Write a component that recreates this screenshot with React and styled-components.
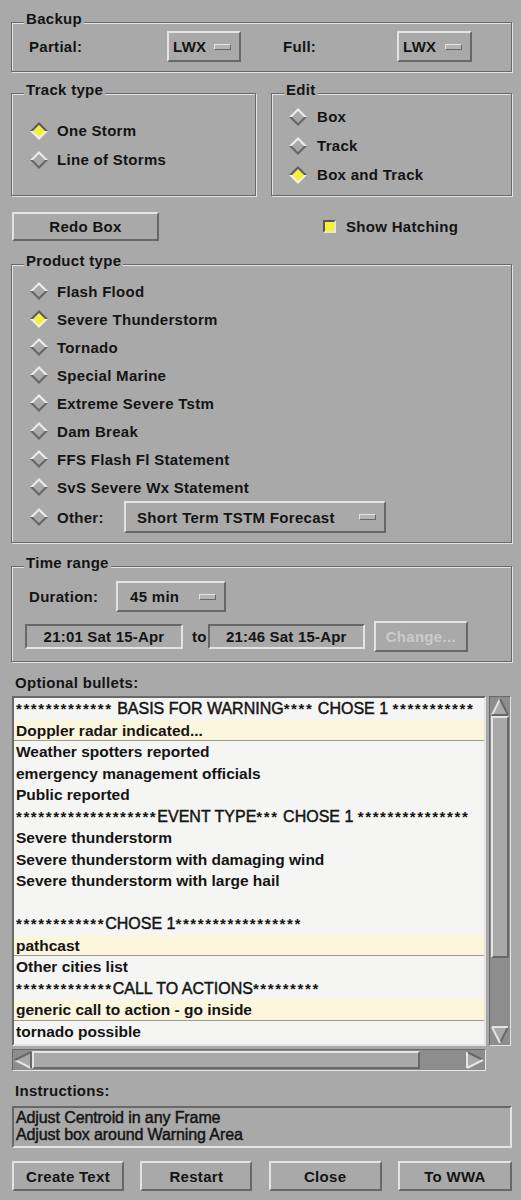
import React from "react";
import styled, { createGlobalStyle } from "styled-components";

const BG = "#a9a9a9";
const LIGHT = "#e4e4e4";
const DARK = "#686868";

const GlobalStyle = createGlobalStyle`
  body {
    margin: 0;
    background: ${BG};
    font-family: "Liberation Sans", Arial, sans-serif;
    font-weight: bold;
    font-size: 15px;
    color: #141414;
  }
`;

const Panel = styled.div`
  width: 521px;
  box-sizing: border-box;
  padding: 22px 9px 0 11px;
  letter-spacing: 0.3px;
`;

const Group = styled.div`
  position: relative;
  border: 1px solid ${DARK};
  box-shadow: inset 1px 1px 0 ${LIGHT}, 1px 1px 0 ${LIGHT};
  padding: ${(p) => p.pad || "0"};
  margin-top: ${(p) => p.mt || 0}px;
`;

const GroupTitle = styled.div`
  position: absolute;
  top: -12px;
  left: 12px;
  padding: 0 2px;
  background: ${BG};
  line-height: 16px;
`;

const BackupRow = styled.div`
  display: grid;
  grid-template-columns: 138px 116px 114px 75px;
  align-items: center;
  height: 31px;
`;

const OptionMenu = styled.div`
  display: flex;
  align-items: center;
  justify-content: space-between;
  box-sizing: border-box;
  width: ${(p) => p.w}px;
  height: ${(p) => p.h || 31}px;
  padding: 0 8px 0 ${(p) => p.pl || 4}px;
  border: 2px solid;
  border-color: ${LIGHT} ${DARK} ${DARK} ${LIGHT};
  white-space: nowrap;
`;

const Indicator = styled.span`
  width: 17px;
  height: 6px;
  box-sizing: border-box;
  border: 1px solid;
  border-color: ${LIGHT} ${DARK} ${DARK} ${LIGHT};
  background: #b4b4b4;
  flex-shrink: 0;
`;

const TwoCol = styled.div`
  display: grid;
  grid-template-columns: 245px 241px;
  gap: 15px;
  margin-top: 21px;
`;

const RadioRow = styled.div`
  display: flex;
  align-items: center;
  gap: ${(p) => p.gap || 9}px;
  height: ${(p) => p.h || 29}px;
`;

const Button = styled.div`
  display: flex;
  align-items: center;
  justify-content: center;
  box-sizing: border-box;
  width: ${(p) => p.w}px;
  height: ${(p) => p.h || 30}px;
  border: 2px solid;
  border-color: ${LIGHT} ${DARK} ${DARK} ${LIGHT};
  color: ${(p) => (p.disabled ? "#cbcbcb" : "#141414")};
`;

const RedoRow = styled.div`
  display: flex;
  align-items: center;
  margin: 16px 0 0 1px;
`;

const Check = styled.label`
  display: flex;
  align-items: center;
  gap: 10px;
  margin-left: 164px;
`;

const CheckBox = styled.span`
  width: 13px;
  height: 13px;
  box-sizing: border-box;
  border: 2px solid;
  border-color: #5a5a3a ${LIGHT} ${LIGHT} #5a5a3a;
  background: #f8f230;
`;

const OtherLabel = styled.span`
  width: 58px;
`;

const DurationRow = styled.div`
  display: flex;
  align-items: center;
  height: 31px;
`;

const DurationLabel = styled.span`
  width: 87px;
  margin-left: 4px;
`;

const TimeRow = styled.div`
  display: flex;
  align-items: center;
  height: 31px;
  margin-top: 9px;
`;

const TimeField = styled.div`
  display: flex;
  align-items: center;
  justify-content: center;
  box-sizing: border-box;
  width: ${(p) => p.w}px;
  height: 25px;
  border: 2px solid;
  border-color: ${DARK} ${LIGHT} ${LIGHT} ${DARK};
  white-space: nowrap;
  letter-spacing: 0.2px;
`;

const To = styled.span`
  margin: 0 1px 0 9px;
`;

const FieldLabel = styled.div`
  margin: ${(p) => p.m};
  line-height: 18px;
`;

const ListRow = styled.div`
  display: flex;
  gap: 3px;
  margin-left: 1px;
`;

const ListBox = styled.div`
  width: 474px;
  height: 350px;
  box-sizing: border-box;
  border: 2px solid;
  border-color: ${DARK} ${LIGHT} ${LIGHT} ${DARK};
  background: #f5f5f3;
  overflow: hidden;
  letter-spacing: 0;
`;

const Item = styled.div`
  height: 21.5px;
  line-height: 21.5px;
  box-sizing: border-box;
  padding-left: 2px;
  white-space: nowrap;
  overflow: hidden;
  font-size: ${(p) => (p.head ? 16 : 15.5)}px;
  font-weight: ${(p) => (p.head ? "normal" : "bold")};
  -webkit-text-stroke: ${(p) => (p.head ? "0.45px #141414" : "0")};
  background: ${(p) => (p.hl ? "#fcf6dc" : "transparent")};
  border-bottom: ${(p) => (p.hl ? "1px solid #9c9c98" : "none")};
`;

const Stars = styled.span`
  letter-spacing: 1.6px;
  font-weight: bold;
  font-size: 15px;
  -webkit-text-stroke: 0;
`;

const VScroll = styled.div`
  display: flex;
  flex-direction: column;
  width: 22px;
  height: 350px;
  box-sizing: border-box;
  border: 1px solid;
  border-color: ${DARK} ${LIGHT} ${LIGHT} ${DARK};
  background: #8d8d8d;
  padding: 1px;
`;

const HScroll = styled.div`
  display: flex;
  width: 474px;
  height: 22px;
  box-sizing: border-box;
  margin: 3px 0 0 1px;
  border: 1px solid;
  border-color: ${DARK} ${LIGHT} ${LIGHT} ${DARK};
  background: #8d8d8d;
  padding: 1px;
`;

const Thumb = styled.div`
  box-sizing: border-box;
  flex: 0 0 ${(p) => p.size}px;
  border: 2px solid;
  border-color: ${LIGHT} ${DARK} ${DARK} ${LIGHT};
  background: ${BG};
`;

const Trough = styled.div`
  flex: 1;
`;

const InfoBox = styled.div`
  width: 500px;
  height: 42px;
  box-sizing: border-box;
  margin-left: 1px;
  border: 2px solid;
  border-color: ${DARK} ${LIGHT} ${LIGHT} ${DARK};
  padding: 1px 2px;
  font-weight: normal;
  font-size: 16px;
  line-height: 17px;
  letter-spacing: -0.1px;
  -webkit-text-stroke: 0.45px #141414;
`;

const ButtonBar = styled.div`
  display: flex;
  justify-content: space-between;
  margin: 13px 0 0 1px;
`;

function Diamond({ on }) {
  return (
    <svg width="18" height="18" viewBox="0 0 18 18">
      <polygon points="0,9 9,0 18,9" fill={on ? "#5c5c5c" : "#ececec"} />
      <polygon points="0,9 9,18 18,9" fill={on ? "#efefef" : "#676767"} />
      <polygon points="3,9 9,3 15,9 9,15" fill={on ? "#f5f03a" : BG} />
    </svg>
  );
}

function Radio({ on, label, gap, h }) {
  return (
    <RadioRow gap={gap} h={h}>
      <Diamond on={on} />
      <span>{label}</span>
    </RadioRow>
  );
}

function Arrow({ dir }) {
  const rot = { up: 0, right: 90, down: 180, left: 270 }[dir];
  const flip = dir === "down" || dir === "right";
  return (
    <svg width="18" height="18" viewBox="0 0 18 18" style={{ flexShrink: 0 }}>
      <g transform={`rotate(${rot} 9 9)`}>
        <polygon points="9,1 17,17 1,17" fill={BG} />
        <line x1="1" y1="17" x2="9" y2="1" stroke={flip ? DARK : LIGHT} strokeWidth="2" />
        <line x1="9" y1="1" x2="17" y2="17" stroke={flip ? LIGHT : DARK} strokeWidth="2" />
        <line x1="1" y1="17" x2="17" y2="17" stroke={flip ? LIGHT : DARK} strokeWidth="2" />
      </g>
    </svg>
  );
}

function StarText({ text }) {
  return text.split(/(\*+)/).map((part, i) =>
    part.startsWith("*") ? <Stars key={i}>{part}</Stars> : <span key={i}>{part}</span>
  );
}

const bullets = [
  { t: "************* BASIS FOR WARNING**** CHOSE 1 ***********", head: true },
  { t: "Doppler radar indicated...", hl: true },
  { t: "Weather spotters reported" },
  { t: "emergency management officials" },
  { t: "Public reported" },
  { t: "*******************EVENT TYPE*** CHOSE 1 ***************", head: true },
  { t: "Severe thunderstorm" },
  { t: "Severe thunderstorm with damaging wind" },
  { t: "Severe thunderstorm with large hail" },
  { t: "" },
  { t: "************CHOSE 1*****************", head: true },
  { t: "pathcast", hl: true },
  { t: "Other cities list" },
  { t: "*************CALL TO ACTIONS*********", head: true },
  { t: "generic call to action - go inside", hl: true },
  { t: "tornado possible" },
];

const products = [
  "Flash Flood",
  "Severe Thunderstorm",
  "Tornado",
  "Special Marine",
  "Extreme Severe Tstm",
  "Dam Break",
  "FFS Flash Fl Statement",
  "SvS Severe Wx Statement",
];

function App() {
  return (
    <Panel>
      <GlobalStyle />
      <Group pad="8px 0 9px 17px">
        <GroupTitle>Backup</GroupTitle>
        <BackupRow>
          <span>Partial:</span>
          <OptionMenu w={74} pl={4}>
            LWX <Indicator />
          </OptionMenu>
          <span>Full:</span>
          <OptionMenu w={75} pl={4}>
            LWX <Indicator />
          </OptionMenu>
        </BackupRow>
      </Group>

      <TwoCol>
        <Group pad="22px 0 0 18px">
          <GroupTitle>Track type</GroupTitle>
          <Radio on label="One Storm" />
          <Radio label="Line of Storms" />
        </Group>
        <Group pad="8px 0 6px 17px">
          <GroupTitle>Edit</GroupTitle>
          <Radio label="Box" gap={10} />
          <Radio label="Track" gap={10} />
          <Radio on label="Box and Track" gap={10} />
        </Group>
      </TwoCol>

      <RedoRow>
        <Button w={147} h={29}>
          Redo Box
        </Button>
        <Check>
          <CheckBox />
          Show Hatching
        </Check>
      </RedoRow>

      <Group mt={23} pad="12px 0 9px 18px">
        <GroupTitle>Product type</GroupTitle>
        {products.map((p, i) => (
          <Radio key={p} on={i === 1} label={p} h={28} />
        ))}
        <RadioRow h={32}>
          <Diamond />
          <OtherLabel>Other:</OtherLabel>
          <OptionMenu w={262} h={32} pl={11}>
            Short Term TSTM Forecast <Indicator />
          </OptionMenu>
        </RadioRow>
      </Group>

      <Group mt={23} pad="14px 0 9px 13px">
        <GroupTitle>Time range</GroupTitle>
        <DurationRow>
          <DurationLabel>Duration:</DurationLabel>
          <OptionMenu w={110} pl={12}>
            45 min <Indicator />
          </OptionMenu>
        </DurationRow>
        <TimeRow>
          <TimeField w={158}>21:01 Sat 15-Apr</TimeField>
          <To>to</To>
          <TimeField w={157}>21:46 Sat 15-Apr</TimeField>
          <Button w={94} h={31} disabled style={{ marginLeft: 9 }}>
            Change...
          </Button>
        </TimeRow>
      </Group>

      <FieldLabel m="12px 0 4px 4px">Optional bullets:</FieldLabel>
      <ListRow>
        <ListBox>
          {bullets.map((b, i) => (
            <Item key={i} hl={b.hl} head={b.head}>
              {b.head ? <StarText text={b.t} /> : b.t}
            </Item>
          ))}
        </ListBox>
        <VScroll>
          <Arrow dir="up" />
          <Thumb size={242} />
          <Trough />
          <Arrow dir="down" />
        </VScroll>
      </ListRow>
      <HScroll>
        <Arrow dir="left" />
        <Thumb size={388} />
        <Trough />
        <Arrow dir="right" />
      </HScroll>

      <FieldLabel m="11px 0 6px 4px">Instructions:</FieldLabel>
      <InfoBox>
        Adjust Centroid in any Frame
        <br />
        Adjust box around Warning Area
      </InfoBox>

      <ButtonBar>
        <Button w={112}>Create Text</Button>
        <Button w={112}>Restart</Button>
        <Button w={113}>Close</Button>
        <Button w={114}>To WWA</Button>
      </ButtonBar>
    </Panel>
  );
}

export default App;
